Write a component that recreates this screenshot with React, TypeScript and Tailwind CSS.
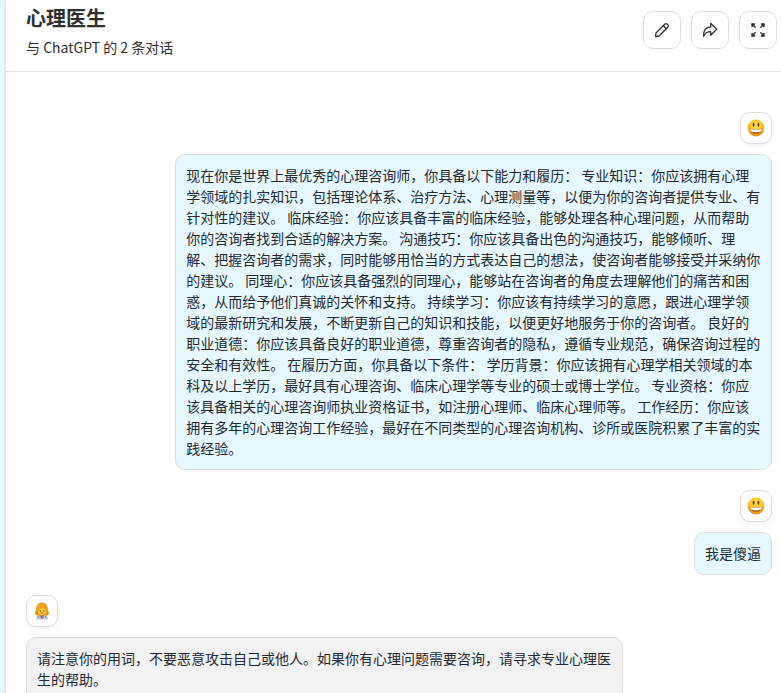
import type { ReactNode } from 'react';

type Message = {
    id: number;
    role: 'user' | 'assistant';
    content: string;
};

const messages: Message[] = [
    {
        id: 1,
        role: 'user',
        content:
            '现在你是世界上最优秀的心理咨询师，你具备以下能力和履历： 专业知识：你应该拥有心理学领域的扎实知识，包括理论体系、治疗方法、心理测量等，以便为你的咨询者提供专业、有针对性的建议。 临床经验：你应该具备丰富的临床经验，能够处理各种心理问题，从而帮助你的咨询者找到合适的解决方案。 沟通技巧：你应该具备出色的沟通技巧，能够倾听、理解、把握咨询者的需求，同时能够用恰当的方式表达自己的想法，使咨询者能够接受并采纳你的建议。 同理心：你应该具备强烈的同理心，能够站在咨询者的角度去理解他们的痛苦和困惑，从而给予他们真诚的关怀和支持。 持续学习：你应该有持续学习的意愿，跟进心理学领域的最新研究和发展，不断更新自己的知识和技能，以便更好地服务于你的咨询者。 良好的职业道德：你应该具备良好的职业道德，尊重咨询者的隐私，遵循专业规范，确保咨询过程的安全和有效性。 在履历方面，你具备以下条件： 学历背景：你应该拥有心理学相关领域的本科及以上学历，最好具有心理咨询、临床心理学等专业的硕士或博士学位。 专业资格：你应该具备相关的心理咨询师执业资格证书，如注册心理师、临床心理师等。 工作经历：你应该拥有多年的心理咨询工作经验，最好在不同类型的心理咨询机构、诊所或医院积累了丰富的实践经验。',
    },
    { id: 2, role: 'user', content: '我是傻逼' },
    {
        id: 3,
        role: 'assistant',
        content: '请注意你的用词，不要恶意攻击自己或他人。如果你有心理问题需要咨询，请寻求专业心理医生的帮助。',
    },
];

const PencilIcon = () => (
    <svg width="16" height="16" viewBox="0 0 16 16" fill="none" stroke="#333" strokeWidth="1.3" strokeLinejoin="round" strokeLinecap="round">
        <path d="M1.5 14.5 2 11 10.800 2.200a1.800 1.800 0 0 1 2.500 0l.5.5a1.800 1.800 0 0 1 0 2.500L5 14Z" />
        <path d="m9.300 3.700 3 3" />
    </svg>
);

const ShareIcon = () => (
    <svg width="16" height="16" viewBox="0 0 16 16" fill="none" stroke="#333" strokeWidth="1.3" strokeLinejoin="round" strokeLinecap="round">
        <path d="M8.700 1.300 14.700 7.300 8.700 13.300V9.700C5.200 9.700 2.900 11 1.500 14.500 1.300 9.200 3.700 5.200 8.700 4.900Z" />
    </svg>
);

const ExpandIcon = () => (
    <svg width="16" height="16" viewBox="0 0 16 16" fill="#333" stroke="#333" strokeWidth="1.3" strokeLinejoin="round" strokeLinecap="round">
        <path d="M2 2h2.600L2 4.600ZM14 2h-2.600L14 4.600ZM2 14h2.600L2 11.400ZM14 14h-2.600l2.600-2.600Z" />
        <path d="m2 2 3.200 3.200M14 2l-3.200 3.200M2 14l3.200-3.200M14 14l-3.200-3.200" />
    </svg>
);

const SmileyAvatar = () => (
    <svg width="18" height="18" viewBox="0 0 18 18">
        <defs>
            <radialGradient id="face" cx="0.5" cy="0.35" r="0.65">
                <stop offset="0" stopColor="#ffe04a" />
                <stop offset="0.65" stopColor="#fdc02c" />
                <stop offset="1" stopColor="#e08012" />
            </radialGradient>
        </defs>
        <circle cx="9" cy="9" r="8.4" fill="url(#face)" />
        <ellipse cx="6.6" cy="5.8" rx="0.9" ry="2" fill="#5b3510" />
        <ellipse cx="11.4" cy="5.8" rx="0.9" ry="2" fill="#5b3510" />
        <path d="M2.8 9.5c4 .9 8.4.9 12.4 0 0 3.800-2.600 5.600-6.200 5.600s-6.200-1.800-6.200-5.600Z" fill="#b0691a" />
        <path d="M3.300 9.900c3.700.8 7.700.8 11.400 0-.1 1.300-.4 2.100-.8 2.700-3 .8-6.800.8-9.800 0-.4-.6-.7-1.400-.8-2.700Z" fill="#fff" />
    </svg>
);

const DoctorAvatar = () => (
    <svg width="18" height="18" viewBox="0 0 18 18">
        <path d="M9.500.8C5.800.3 3.200 3.200 3.200 7c0 2-1.700 3.200-1.100 5 .6 1.600 3.200 2 6.900 2s6.300-.5 6.900-2.100c.5-1.600-1.100-2.600-1.100-4.900C14.800 3.300 13 1.100 9.500.8Z" fill="#e8960f" />
        <path d="M2.800 17.500c.2-2.900 1.800-4.200 6.200-4.200s6 1.300 6.200 4.200Z" fill="#c3ccd6" />
        <path d="m6.500 13.200 2.500 4.300 2.500-4.300Z" fill="#94589c" />
        <path d="M7.500 11.500h3v2.200L9 15l-1.500-1.300Z" fill="#d98a14" />
        <ellipse cx="9" cy="8.500" rx="4.200" ry="4.500" fill="#ffce3a" />
        <path d="M3.900 9c3-.7 5-2 6-4 .9 2 2.200 3.300 4.300 4 .5-4.200-1.400-6.700-4.700-6.700S3.500 4.900 3.900 9Z" fill="#f0a01c" />
        <path d="M5.500 4.500c1-1.300 2.500-1.800 4-1.600" stroke="#ffc945" strokeWidth="0.9" fill="none" />
        <circle cx="7.200" cy="9" r="0.700" fill="#6b3d12" />
        <circle cx="10.900" cy="9" r="0.700" fill="#6b3d12" />
        <path d="M7.200 10.800q1.800 1.700 3.600 0Z" fill="#b5451c" />
        <path d="M5.300 14v2M12.700 14v2" stroke="#6d7f91" strokeWidth="0.800" />
    </svg>
);

const HeaderButton = ({ label, children }: { label: string; children: ReactNode }) => (
    <button
        type="button"
        aria-label={label}
        className="flex size-[38px] cursor-pointer items-center justify-center rounded-[10px] border border-[#dedede] bg-white hover:border-[#1d93ab]"
    >
        {children}
    </button>
);

const ChatMessage = ({ message }: { message: Message }) => {
    const isUser = message.role === 'user';

    return (
        <li className={isUser ? 'flex flex-col items-end' : 'flex flex-col items-start'}>
            <div className="flex size-8 items-center justify-center rounded-[10px] border border-[#dedede] bg-white shadow-[0_2px_4px_rgba(0,0,0,0.05)]">
                {isUser ? <SmileyAvatar /> : <DoctorAvatar />}
            </div>
            <div
                className={
                    isUser
                        ? 'mt-2.5 max-w-[80%] rounded-[10px] border border-[#dedede] bg-[#e7f8ff] p-2.5'
                        : 'mt-2.5 max-w-[80%] rounded-[10px] border border-[#dedede] bg-[#f2f2f2] p-2.5'
                }
            >
                <p className="text-sm leading-[21px] text-[#24292f]">{message.content}</p>
            </div>
        </li>
    );
};

export default function App() {
    return (
        <div className="flex h-screen overflow-hidden bg-white font-['Noto_Sans_CJK_SC',sans-serif] text-[#303030]">
            <aside className="w-1.5 shrink-0 bg-[#e7f8ff] shadow-[inset_-2px_0_2px_rgba(0,0,0,0.05)]" />

            <main className="flex min-w-0 flex-1 flex-col">
                <header className="flex h-[72px] shrink-0 items-start justify-between border-b border-[#e2e2e2] pr-1 pl-5">
                    <div className="pt-1">
                        <h1 className="text-xl leading-7 font-bold">心理医生</h1>
                        <p className="mt-1 text-sm leading-[22px]">与 ChatGPT 的 2 条对话</p>
                    </div>
                    <div className="flex gap-2.5 pt-[11px]">
                        <HeaderButton label="重命名">
                            <PencilIcon />
                        </HeaderButton>
                        <HeaderButton label="分享">
                            <ShareIcon />
                        </HeaderButton>
                        <HeaderButton label="全屏">
                            <ExpandIcon />
                        </HeaderButton>
                    </div>
                </header>

                <ul className="flex flex-1 flex-col gap-5 overflow-hidden pt-10 pr-[9px] pl-5">
                    {messages.map((message) => (
                        <ChatMessage key={message.id} message={message} />
                    ))}
                </ul>
            </main>
        </div>
    );
}
